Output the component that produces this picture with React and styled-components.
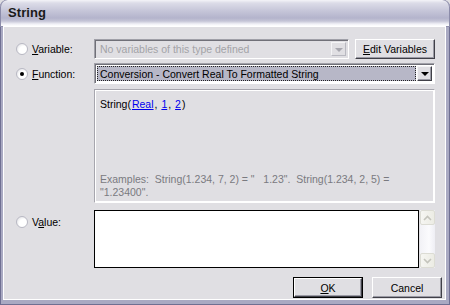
import React from 'react';
import styled, { createGlobalStyle } from 'styled-components';

const GlobalStyle = createGlobalStyle`
  html, body {
    margin: 0;
    padding: 0;
    overflow: hidden;
    background: #e0dfe3;
  }
  body {
    font-family: "Liberation Sans", Arial, sans-serif;
    font-size: 10.5px;
    color: #000;
  }
`;

const Window = styled.div`
  width: 450px;
  height: 305px;
  display: flex;
  flex-direction: column;
  background: #a9a9c2;
  border-radius: 7px 7px 0 0;
  box-shadow: inset 1px 0 0 #6f6f92, inset -1px 0 0 #6f6f92, inset 0 -1px 0 #6f6f92;
  overflow: hidden;
`;

const TitleBar = styled.div`
  height: 27px;
  flex: none;
  display: flex;
  align-items: center;
  padding: 0 8px 2px;
  box-sizing: border-box;
  background: linear-gradient(
    to bottom,
    #f4f4f8 0px,
    #dcdce8 3px,
    #c8c8da 10px,
    #b4b4cc 18px,
    #c4c4d6 21px,
    #f0f0f6 24px,
    #ffffff 26px
  );
  border-radius: 7px 7px 0 0;
  border-bottom: 1px solid #8e8eab;
  box-shadow: inset 1px 0 0 #8c8caa, inset -1px 0 0 #8c8caa;
`;

const Title = styled.span`
  font-weight: bold;
  font-size: 13px;
  color: #1a1a1a;
  letter-spacing: 0.1px;
`;

const Client = styled.div`
  flex: 1;
  margin: 0 5px 6px 4px;
  background: #e0dfe3;
  box-shadow: 0 0 0 1px #ffffff;
  padding: 12px 3px 0 12px;
  display: flex;
  flex-direction: column;
`;

const Form = styled.div`
  display: grid;
  grid-template-columns: 78px 1fr;
  row-gap: 4px;
  margin-right: 7px;
`;

const Choice = styled.label`
  display: flex;
  align-items: ${({ $top }) => ($top ? 'flex-start' : 'center')};
  gap: 4px;
  padding-top: ${({ $top }) => ($top ? '9px' : '0')};
  grid-row: ${({ $row }) => $row};
  grid-column: 1;
`;

const Radio = styled.span`
  width: 12px;
  height: 12px;
  border-radius: 50%;
  box-sizing: border-box;
  border: 1px solid #b9b9c4;
  background: radial-gradient(circle at 65% 65%, #ffffff 0, #ffffff 45%, #d8d8de 100%);
  position: relative;
  flex: none;
  &::after {
    content: '';
    display: ${({ $checked }) => ($checked ? 'block' : 'none')};
    position: absolute;
    left: 3px;
    top: 3px;
    width: 4px;
    height: 4px;
    border-radius: 50%;
    background: #000;
  }
`;

const Key = styled.span`
  text-decoration: underline;
`;

const Field = styled.div`
  grid-column: 2;
  display: flex;
  gap: 6px;
`;

const Combo = styled.div`
  flex: 1;
  height: ${({ $h }) => $h}px;
  box-sizing: border-box;
  display: flex;
  border: 1px solid;
  border-color: #a0a0a8 #ffffff #ffffff #a0a0a8;
  box-shadow: inset 1px 1px 0 #707078;
  padding: 2px;
  background: ${({ $disabled }) => ($disabled ? '#e0dfe3' : '#ffffff')};
`;

const ComboText = styled.div`
  flex: 1;
  display: flex;
  align-items: center;
  padding-left: 3px;
  margin-right: 1px;
  color: ${({ $disabled }) => ($disabled ? '#a3a3a7' : '#000')};
  background: ${({ $selected }) => ($selected ? '#b7b7c7' : 'transparent')};
  outline: ${({ $selected }) => ($selected ? '1px dotted #222' : 'none')};
  outline-offset: -1px;
  white-space: nowrap;
  overflow: hidden;
`;

const ArrowButton = styled.div`
  width: 15px;
  flex: none;
  display: flex;
  align-items: center;
  justify-content: center;
  box-sizing: border-box;
  background: #e0dfe3;
  border: 1px solid;
  border-color: ${({ $disabled }) =>
    $disabled ? '#f4f4f6 #b8b8c0 #b8b8c0 #f4f4f6' : '#f4f4f6 #404048 #404048 #f4f4f6'};
  box-shadow: ${({ $disabled }) => ($disabled ? 'none' : 'inset -1px -1px 0 #9a9aa4')};
  &::after {
    content: '';
    border-left: 4px solid transparent;
    border-right: 4px solid transparent;
    border-top: 4px solid ${({ $disabled }) => ($disabled ? '#a6a6ae' : '#000')};
    margin-top: 1px;
  }
`;

const Button = styled.button`
  font-family: "Liberation Sans", Arial, sans-serif;
  font-size: 10.5px;
  color: #000;
  width: ${({ $w }) => $w}px;
  height: ${({ $h }) => $h || 20}px;
  padding: 0;
  box-sizing: border-box;
  background: #e0dfe3;
  border: 1px solid;
  border-color: #ffffff #404048 #404048 #ffffff;
  box-shadow: inset -1px -1px 0 #9a9aa4${({ $default }) => ($default ? ', 0 0 0 1px #000' : '')};
  margin: ${({ $default }) => ($default ? '1px' : '0')};
  cursor: pointer;
`;

const Panel = styled.div`
  grid-column: 2;
  margin-top: 1px;
  height: 114px;
  box-sizing: border-box;
  border: 1px solid;
  border-color: #a7a6ae #ffffff #ffffff #a7a6ae;
  outline: 1px solid #ffffff;
  outline-offset: -2px;
  padding: 7px 6px 3px 5px;
  display: flex;
  flex-direction: column;
  justify-content: space-between;
`;

const Signature = styled.div`
  line-height: 14px;
`;

const Param = styled.a`
  color: #0000ee;
  text-decoration: underline;
  padding: 0 1px;
`;

const Examples = styled.div`
  color: #7a7a80;
  line-height: 13px;
  white-space: pre-wrap;
`;

const ValueRow = styled.div`
  grid-column: 2;
  margin-top: 3px;
  display: flex;
  height: 58px;
`;

const TextBox = styled.div`
  flex: 1;
  background: #ffffff;
  border: 1px solid #000;
`;

const ScrollBar = styled.div`
  width: 15px;
  margin-left: 1px;
  display: flex;
  flex-direction: column;
  justify-content: space-between;
  background: linear-gradient(to right, #f2f2f6, #fbfbfd 60%, #eeeef4);
`;

const ScrollArrow = styled.div`
  height: 15px;
  box-sizing: border-box;
  border: 1px solid #dcdcd4;
  border-radius: 2px;
  background: linear-gradient(to right, #f6f6f2, #ecece4);
  display: flex;
  align-items: center;
  justify-content: center;
`;

const ButtonBar = styled.div`
  display: flex;
  justify-content: flex-end;
  gap: 9px;
  margin-top: 9px;
`;

const Chevron = ({ up }) => (
  <svg width="9" height="6" viewBox="0 0 9 6">
    <path
      d={up ? 'M1 5 L4.5 1.5 L8 5' : 'M1 1 L4.5 4.5 L8 1'}
      fill="none"
      stroke="#c4c4bc"
      strokeWidth="1.6"
    />
  </svg>
);

export default function App() {
  return (
    <>
      <GlobalStyle />
      <Window>
        <TitleBar>
          <Title>String</Title>
        </TitleBar>
        <Client>
          <Form>
            <Choice $row={1}>
              <Radio />
              <span><Key>V</Key>ariable:</span>
            </Choice>
            <Field>
              <Combo $h={20} $disabled>
                <ComboText $disabled>No variables of this type defined</ComboText>
                <ArrowButton $disabled />
              </Combo>
              <Button $w={80} $h={20}><Key>E</Key>dit Variables</Button>
            </Field>

            <Choice $row={2}>
              <Radio $checked />
              <span><Key>F</Key>unction:</span>
            </Choice>
            <Field>
              <Combo $h={21}>
                <ComboText $selected>Conversion - Convert Real To Formatted String</ComboText>
                <ArrowButton />
              </Combo>
            </Field>

            <Panel>
              <Signature>
                String(<Param>Real</Param>, <Param>1</Param>, <Param>2</Param>)
              </Signature>
              <Examples>
                {'Examples:  String(1.234, 7, 2) = "   1.23".  String(1.234, 2, 5) =\n"1.23400".'}
              </Examples>
            </Panel>

            <Choice $row={4} $top>
              <Radio />
              <span>V<Key>a</Key>lue:</span>
            </Choice>
            <ValueRow>
              <TextBox />
              <ScrollBar>
                <ScrollArrow><Chevron up /></ScrollArrow>
                <ScrollArrow><Chevron /></ScrollArrow>
              </ScrollBar>
            </ValueRow>
          </Form>
          <ButtonBar>
            <Button $w={68} $h={19} $default><Key>O</Key>K</Button>
            <Button $w={70} $h={21}>Cancel</Button>
          </ButtonBar>
        </Client>
      </Window>
    </>
  );
}
